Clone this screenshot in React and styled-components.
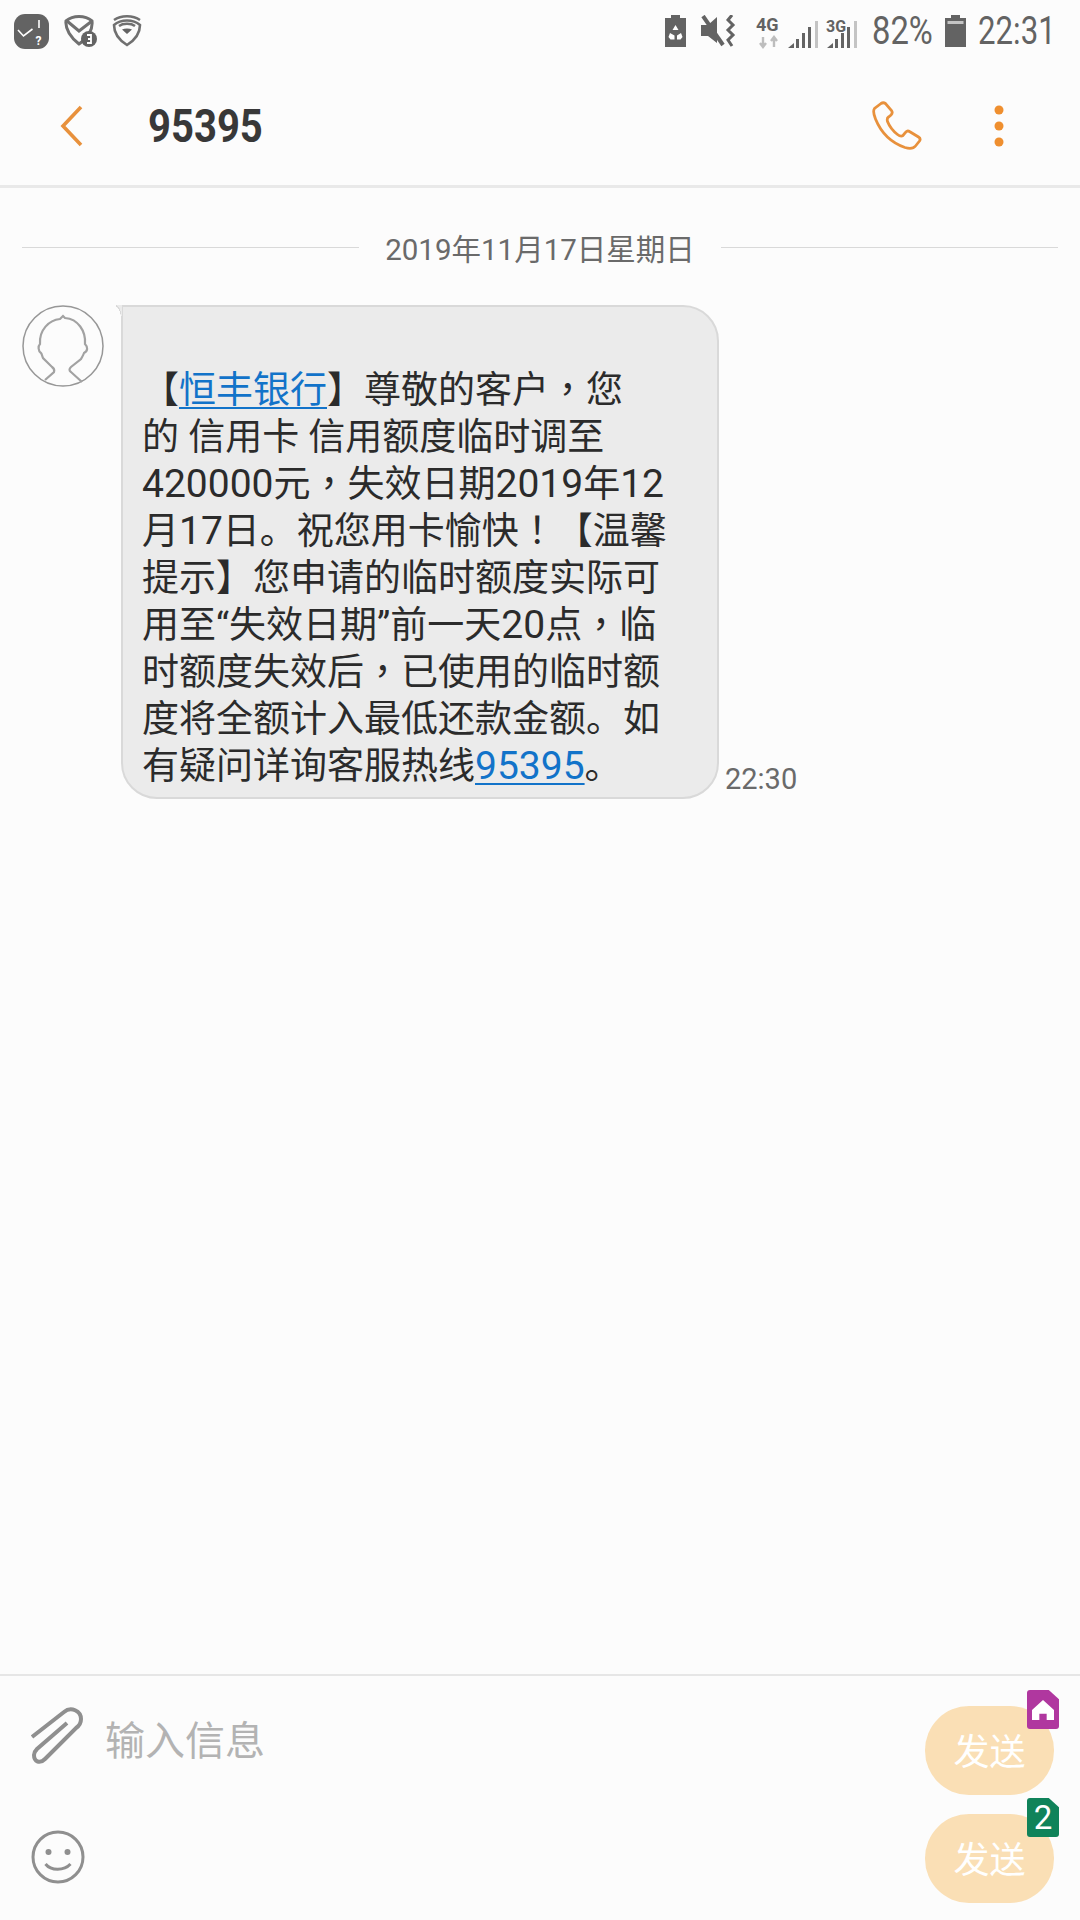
import React from 'react';
import styled, { createGlobalStyle } from 'styled-components';

const GlobalStyle = createGlobalStyle`
    html, body {
        margin: 0;
        padding: 0;
        background: #fcfcfc;
    }
`;

const Screen = styled.div`
    width: 1080px;
    height: 1920px;
    display: flex;
    flex-direction: column;
    overflow: hidden;
    background: #fcfcfc;
    font-family: Roboto, "Noto Sans CJK SC", sans-serif;
    color: #2b2b2b;
`;

const StatusBar = styled.div`
    height: 62px;
    flex: none;
    display: flex;
    justify-content: space-between;
    align-items: center;
    padding: 0 24px 0 14px;
`;

const StatusGroup = styled.div`
    display: flex;
    align-items: center;
    gap: ${(p) => p.$gap || 0}px;
`;

const StatusSlot = styled.div`
    display: flex;
    margin-left: ${(p) => p.$left || 0}px;
`;

const StatusText = styled.span`
    display: block;
    width: ${(p) => p.$width}px;
    margin-left: ${(p) => p.$left || 0}px;
    font-size: 39px;
    color: #636363;
    line-height: 1;
    white-space: nowrap;
    transform: scaleX(${(p) => p.$scale});
    transform-origin: left center;
`;

const Header = styled.header`
    height: 126px;
    flex: none;
    box-sizing: border-box;
    display: flex;
    align-items: center;
    border-bottom: 3px solid #e9e9e9;
    padding: 5px 0 0 60px;
`;

const Title = styled.h1`
    margin: 0 0 0 64px;
    flex: 1;
    font-size: 46px;
    font-weight: 700;
    line-height: 1;
    color: #383838;
    transform: scaleX(0.87);
    transform-origin: left center;
`;

const HeaderActions = styled.div`
    display: flex;
    align-items: center;
    gap: 72px;
    padding-right: 76px;
`;

const Thread = styled.main`
    flex: 1;
    display: flex;
    flex-direction: column;
    padding: 0 22px;
`;

const DateRow = styled.div`
    display: flex;
    align-items: center;
    gap: 26px;
    height: 34px;
    margin-top: 42px;
    font-size: 29.500px;
    color: #6a6a6a;
    white-space: nowrap;

    &::before,
    &::after {
        content: '';
        flex: 1;
        height: 1px;
        background: #d9d9d9;
    }
`;

const Message = styled.div`
    display: flex;
    align-items: flex-end;
    margin-top: 41px;
`;

const AvatarSlot = styled.div`
    width: 99px;
    flex: none;
    align-self: flex-start;
`;

const Bubble = styled.div`
    position: relative;
    width: 598px;
    box-sizing: border-box;
    padding: 60px 20px 7px 19px;
    background: #ebebeb;
    border: 2px solid #d9d9d9;
    border-radius: 0 36px 36px 36px;
    font-size: 37px;
    line-height: 47px;
    white-space: nowrap;
    color: #2b2b2b;

    /* little flared tail at the top left corner */
    &::before {
        content: '';
        position: absolute;
        top: -2px;
        left: -7px;
        width: 6px;
        height: 18px;
        background: radial-gradient(ellipse at bottom left, transparent 0 62%, #d9d9d9 64% 70%, #ebebeb 71%);
    }
`;

const MessageLink = styled.span`
    color: #1273c9;
    text-decoration: underline;
    text-decoration-thickness: 2px;
    text-underline-offset: 4px;
`;

const Digits = styled.span`
    font-size: 39px;
    line-height: 0;
`;

const Punct = styled.span`
    font-family: "Noto Sans CJK TC", sans-serif;
    line-height: 0;
`;

const Time = styled.span`
    font-size: 29px;
    color: #6a6a6a;
    margin: 0 0 3px 6px;
`;

const Composer = styled.footer`
    height: 246px;
    flex: none;
    box-sizing: border-box;
    border-top: 2px solid #e6e6e6;
    display: flex;
    justify-content: space-between;
    padding: 28px 26px 0 31px;
`;

const ComposerLeft = styled.div`
    display: flex;
    flex-direction: column;
`;

const InputRow = styled.div`
    display: flex;
    align-items: center;
    height: 64px;
    gap: 22px;
`;

const Placeholder = styled.span`
    font-size: 40px;
    color: #b3b3b3;
    margin-top: 3px;
`;

const EmojiRow = styled.div`
    margin-top: 62px;
`;

const SendColumn = styled.div`
    display: flex;
    flex-direction: column;
    gap: 19px;
    padding-top: 2px;
`;

const SendButton = styled.button`
    position: relative;
    width: 129px;
    height: 89px;
    padding: 0 0 4px;
    border: none;
    border-radius: 44px;
    background: #fadfb5;
    color: #fff;
    font: inherit;
    font-size: 36px;
`;

const SimBadge = styled.span`
    position: absolute;
    top: -16px;
    right: -5px;
    width: 32px;
    height: 39px;
    display: flex;
    align-items: center;
    justify-content: center;
    background: ${(p) => p.$color};
    border-radius: 3px 9px 3px 3px;
    clip-path: polygon(0 0, 68% 0, 100% 24%, 100% 100%, 0 100%);
    color: #fff;
    font-size: 33px;
    line-height: 1;
`;

const ConfirmIcon = () => (
    <svg width="35" height="35" viewBox="0 0 35 35">
        <rect width="35" height="35" rx="11" fill="#636363" />
        <path d="M4 16l5.500 6 9-7" fill="none" stroke="#fff" strokeWidth="1.600" />
        <path d="M25 6v8" stroke="#fff" strokeWidth="1.600" />
        <text x="21.500" y="31" fill="#fff" fontSize="12" fontFamily="Roboto" fontWeight="700">?</text>
    </svg>
);

const MailShieldIcon = () => (
    <svg width="33" height="32" viewBox="0 0 33 32">
        <path d="M2 6C9 0 21 0 28 6C29 14 24 23 15 29C7 23 1 14 2 6Z" fill="none" stroke="#707070" strokeWidth="3" />
        <path d="M3 6l12 10L28 6" fill="none" stroke="#707070" strokeWidth="3" />
        <circle cx="25" cy="24" r="8" fill="#636363" />
        <path d="M23 20h4v8h-4M24 24h3" fill="none" stroke="#fff" strokeWidth="1.800" />
    </svg>
);

const WifiShieldIcon = () => (
    <svg width="30" height="32" viewBox="0 0 30 32">
        <path d="M2 10C9 4 21 4 28 10C28 18 23 25 15 30C7 25 2 18 2 10Z" fill="none" stroke="#707070" strokeWidth="2.600" />
        <path d="M2 5C9 0 21 0 28 5" fill="none" stroke="#707070" strokeWidth="2.400" />
        <path d="M7 11C11 8 19 8 23 11" fill="none" stroke="#707070" strokeWidth="2.400" />
        <path d="M10 14.500C13 13 17 13 20 14.500L15 19Z" fill="#636363" />
    </svg>
);

const RecycleBatteryIcon = () => (
    <svg width="21" height="32" viewBox="0 0 21 32">
        <path d="M6 0h9v3h6v29H0V3h6Z" fill="#636363" />
        <path d="M10.500 10l3 5h-6ZM5 18l-1.500 4 2 2.500h4v-4ZM16 18l1.500 4-2 2.500h-3.500v-4Z" fill="#fff" />
    </svg>
);

const MuteVibrateIcon = () => (
    <svg width="36" height="32" viewBox="0 0 36 32">
        <path d="M0 10h7l9-8v26l-9-7H0Z" fill="#636363" />
        <path d="M2 1l20 29" stroke="#636363" strokeWidth="4" />
        <path d="M31 0l-4 5 5 5-5 5 5 5-5 5 4 6" fill="none" stroke="#636363" strokeWidth="3" />
    </svg>
);

const NetworkIcon = () => (
    <svg width="26" height="37" viewBox="0 -3 26 37">
        <text x="1" y="14.500" fontFamily="Roboto" fontWeight="700" fontSize="18" fill="#636363">4G</text>
        <path d="M8 21v9M5 27l3 4 3-4M19 31v-9M16 25l3-4 3 4" fill="none" stroke="#bdbdbd" strokeWidth="2.400" />
    </svg>
);

const SignalIcon = ({ label }) => (
    <svg width="32" height="33" viewBox="0 -3 32 33">
        {label && <text x="0" y="13.500" fontFamily="Roboto" fontWeight="700" fontSize="16" fill="#636363">{label}</text>}
        <path d="M1 30l6-5v5Z" fill="#636363" />
        <rect x="9" y="21" width="3" height="9" fill="#636363" />
        <rect x="15" y="15" width="3" height="15" fill="#636363" />
        <rect x="21" y="9" width="3" height="21" fill="#636363" />
        <rect x="28" y="3" width="3" height="27" fill="#c4c4c4" />
    </svg>
);

const BatteryIcon = () => (
    <svg width="21" height="32" viewBox="0 0 21 32">
        <path d="M6 0h9v3h6v29H0V3h6Z" fill="#636363" />
        <rect x="2.500" y="6" width="16" height="3" fill="#c4c4c4" />
    </svg>
);

const BackIcon = () => (
    <svg width="24" height="42" viewBox="0 0 24 42">
        <path d="M21 2L3 21l18 19" fill="none" stroke="#e8913c" strokeWidth="3.600" />
    </svg>
);

const PhoneIcon = () => (
    <svg width="50" height="50" viewBox="0 0 50 50">
        <path
            d="M9 2.500L2.500 7.500C1 9.500 1.500 13 3.500 18C8 29 17 41 33 46.500C38 48 41.500 47.500 43.500 45L47.500 40C48.500 38.500 48 37 46.500 36L37.500 30.500C36 29.500 34.500 30 33.500 31.500L31 34.500C29.500 35.500 27.500 35 25.500 33.500C21 30 17.500 25.500 15.500 20.500C15 18.500 15 17 16.500 16L19 14C20.500 12.500 20.500 11 19.500 9.500L13.500 2.500C12 1.500 10.500 1.500 9 2.500Z"
            fill="none"
            stroke="#e8913c"
            strokeWidth="2.800"
        />
    </svg>
);

const MoreIcon = () => (
    <svg width="10" height="42" viewBox="0 0 10 42">
        <circle cx="5" cy="5" r="4.500" fill="#ef8f2f" />
        <circle cx="5" cy="21" r="4.500" fill="#ef8f2f" />
        <circle cx="5" cy="37" r="4.500" fill="#ef8f2f" />
    </svg>
);

const AvatarIcon = () => (
    <svg width="82" height="82" viewBox="0 0 82 82">
        <circle cx="41" cy="41" r="40" fill="#fcfcfc" stroke="#979797" strokeWidth="1.500" />
        <path
            d="M23 75L32 67Q33 64 30 62L21 53C20 51 20 49 19 48C16 46 16 41 18 39C17 25 27 15 38 14L41 11L43 13C56 14 64 26 63 39C66 42 66 46 62 48C61 51 60 52 59 54L49 62Q46 65 49 67L60 77"
            fill="none"
            stroke="#a2a2a2"
            strokeWidth="2.200"
        />
    </svg>
);

const ClipIcon = () => (
    <svg width="52" height="58" viewBox="0 0 52 58">
        <path
            d="M1 30L33 5C40 -1 50 4 50 12C50 16 48 19 45 21L14 52C9 57 3 55 3 48C3 46 4 44 6 42L36 16"
            fill="none"
            stroke="#8f8f8f"
            strokeWidth="4"
        />
    </svg>
);

const SmileIcon = () => (
    <svg width="54" height="54" viewBox="0 0 54 54">
        <circle cx="27" cy="27" r="25" fill="none" stroke="#8f8f8f" strokeWidth="3" />
        <circle cx="17.500" cy="22" r="3" fill="#8f8f8f" />
        <circle cx="36.500" cy="22" r="3" fill="#8f8f8f" />
        <path d="M14.500 34C20 41 33 41 39.500 34" fill="none" stroke="#8f8f8f" strokeWidth="3" />
    </svg>
);

const HomeGlyph = () => (
    <svg width="24" height="22" viewBox="0 0 26 24">
        <path d="M13 1L25 12V23H17V16H9V23H1V12Z" fill="#fff" />
    </svg>
);

export default function App() {
    return (
        <Screen>
            <GlobalStyle />
            <StatusBar>
                <StatusGroup $gap={15}>
                    <ConfirmIcon />
                    <MailShieldIcon />
                    <WifiShieldIcon />
                </StatusGroup>
                <StatusGroup>
                    <StatusSlot><RecycleBatteryIcon /></StatusSlot>
                    <StatusSlot $left={15}><MuteVibrateIcon /></StatusSlot>
                    <StatusSlot $left={18}><NetworkIcon /></StatusSlot>
                    <StatusSlot $left={6}><SignalIcon /></StatusSlot>
                    <StatusSlot $left={7}><SignalIcon label="3G" /></StatusSlot>
                    <StatusText $width={61} $scale={0.84} $left={14}>82%</StatusText>
                    <StatusSlot $left={12}><BatteryIcon /></StatusSlot>
                    <StatusText $width={78} $scale={0.8} $left={12}>22:31</StatusText>
                </StatusGroup>
            </StatusBar>
            <Header>
                <BackIcon />
                <Title>95395</Title>
                <HeaderActions>
                    <PhoneIcon />
                    <MoreIcon />
                </HeaderActions>
            </Header>
            <Thread>
                <DateRow>2019年11月17日星期日</DateRow>
                <Message>
                    <AvatarSlot>
                        <AvatarIcon />
                    </AvatarSlot>
                    <Bubble>
                        【<MessageLink>恒丰银行</MessageLink>】尊敬的客户<Punct>，</Punct>您<br />
                        的 信用卡 信用额度临时调至<br />
                        <Digits>420000</Digits>元<Punct>，</Punct>失效日期<Digits>2019</Digits>年<Digits>12</Digits><br />
                        月<Digits>17</Digits>日。祝您用卡愉快<Punct>！</Punct>【温馨<br />
                        提示】您申请的临时额度实际可<br />
                        用至“失效日期”前一天<Digits>20</Digits>点<Punct>，</Punct>临<br />
                        时额度失效后<Punct>，</Punct>已使用的临时额<br />
                        度将全额计入最低还款金额。如<br />
                        有疑问详询客服热线<MessageLink><Digits>95395</Digits></MessageLink>。
                    </Bubble>
                    <Time>22:30</Time>
                </Message>
            </Thread>
            <Composer>
                <ComposerLeft>
                    <InputRow>
                        <ClipIcon />
                        <Placeholder>输入信息</Placeholder>
                    </InputRow>
                    <EmojiRow>
                        <SmileIcon />
                    </EmojiRow>
                </ComposerLeft>
                <SendColumn>
                    <SendButton>
                        发送
                        <SimBadge $color="#b0379f"><HomeGlyph /></SimBadge>
                    </SendButton>
                    <SendButton>
                        发送
                        <SimBadge $color="#10835a">2</SimBadge>
                    </SendButton>
                </SendColumn>
            </Composer>
        </Screen>
    );
}
